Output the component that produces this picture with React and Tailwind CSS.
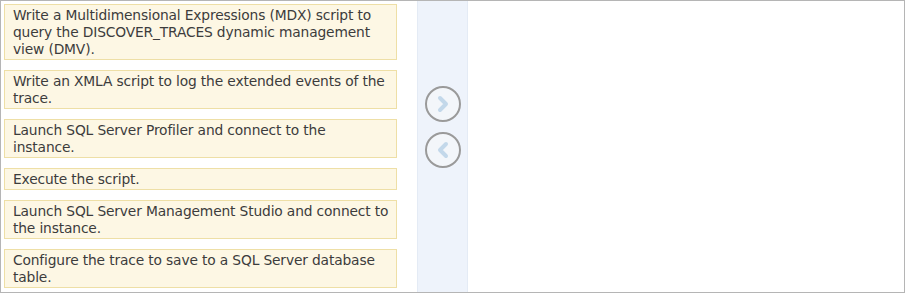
const steps = [
  ['Write a Multidimensional Expressions (MDX) script to', 'query the DISCOVER_TRACES dynamic management', 'view (DMV).'],
  ['Write an XMLA script to log the extended events of the', 'trace.'],
  ['Launch SQL Server Profiler and connect to the', 'instance.'],
  ['Execute the script.'],
  ['Launch SQL Server Management Studio and connect to', 'the instance.'],
  ['Configure the trace to save to a SQL Server database', 'table.'],
]

function ArrowButton({ dir }) {
  return (
    <div className="w-[36px] h-[36px] rounded-full border-2 border-[#9a9a9a] bg-[#f3f6fa] flex items-center justify-center">
      <svg width="16" height="18" viewBox="0 0 16 18">
        {dir === 'right' ? (
          <path d="M5 3 L11 9 L5 15" fill="none" stroke="#c3d8ea" strokeWidth="4" strokeLinecap="round" strokeLinejoin="round" />
        ) : (
          <path d="M11 3 L5 9 L11 15" fill="none" stroke="#c3d8ea" strokeWidth="4" strokeLinecap="round" strokeLinejoin="round" />
        )}
      </svg>
    </div>
  )
}

export default function App() {
  return (
    <div className="w-[907px] h-[295px] bg-white" style={{ fontFamily: '"DejaVu Sans", Verdana, sans-serif' }}>
      <div className="w-[905px] h-[293px] border border-[#b5b5b5] flex">
        <div className="w-[416px] shrink-0 flex flex-col gap-[10px] pl-[3px] pt-[3px] pr-[20px]">
          {steps.map(lines => (
            <div
              key={lines[0]}
              className="border border-[#eedfa6] bg-[#fdf7e4] pl-[8px] pr-[2px] py-[1.5px] text-[13.8px] leading-[17px] tracking-[-0.15px] text-[#3c3c3c] whitespace-nowrap"
            >
              {lines.map(l => (
                <div key={l}>{l}</div>
              ))}
            </div>
          ))}
        </div>
        <div className="w-[51px] shrink-0 bg-[#eef3fb] border-x border-[#e4ebf5] flex flex-col items-center pt-[85px] gap-[10px]">
          <ArrowButton dir="right" />
          <ArrowButton dir="left" />
        </div>
        <div className="flex-1 bg-white" />
      </div>
    </div>
  )
}
